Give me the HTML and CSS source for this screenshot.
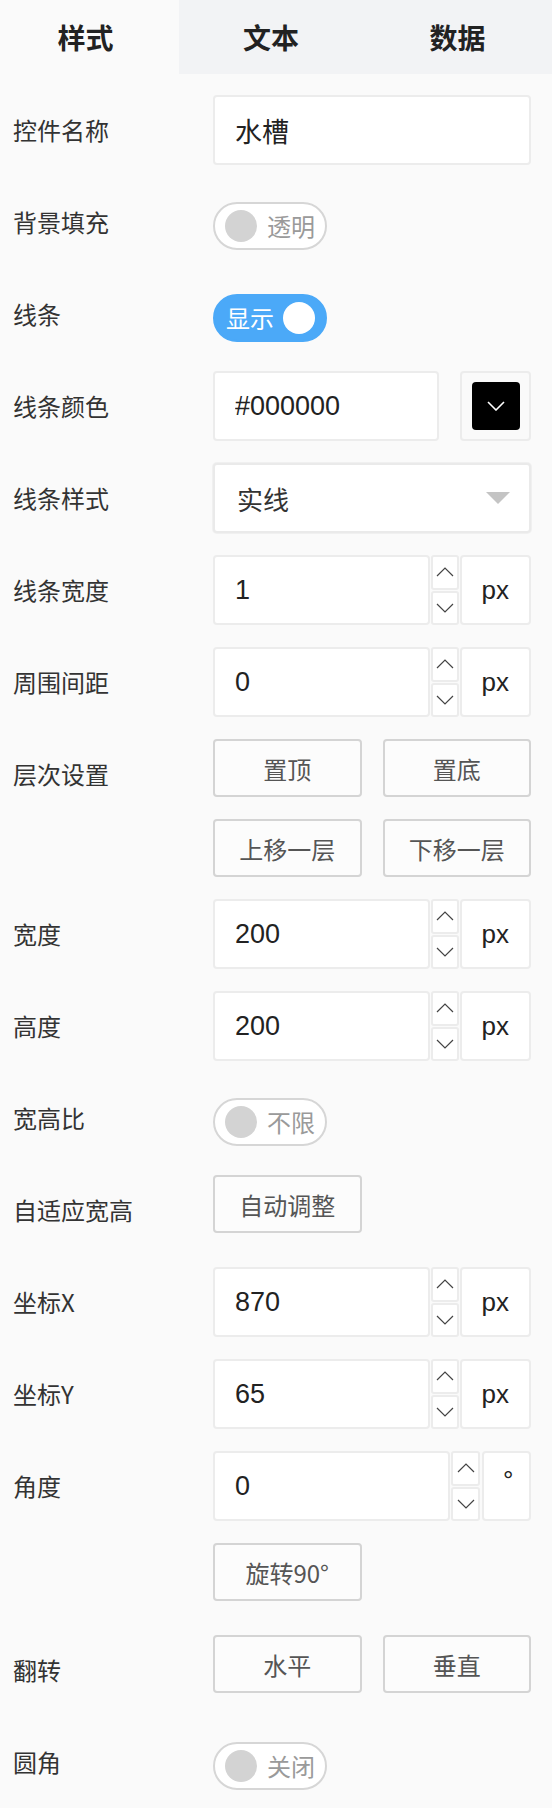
FILE: index.html
```html
<!DOCTYPE html>
<html lang="zh-CN">
<head>
<meta charset="utf-8">
<title>样式</title>
<link rel="stylesheet" href="styles.css">
</head>
<body>
<div class="panel">
  <div class="tabs">
    <div class="tab tab-active">样式</div>
    <div class="tab">文本</div>
    <div class="tab">数据</div>
  </div>

  <div class="form">
    <div class="row">
      <div class="label">控件名称</div>
      <div class="ctrl"><input class="field" value="水槽"></div>
    </div>

    <div class="row">
      <div class="label">背景填充</div>
      <div class="ctrl">
        <div class="toggle"><span class="knob"></span><span class="toggle-text">透明</span></div>
      </div>
    </div>

    <div class="row">
      <div class="label">线条</div>
      <div class="ctrl">
        <div class="toggle toggle-on"><span class="toggle-text">显示</span><span class="knob"></span></div>
      </div>
    </div>

    <div class="row">
      <div class="label">线条颜色</div>
      <div class="ctrl color-group">
        <input class="field" value="#000000">
        <div class="swatch-box">
          <div class="swatch">
            <svg width="18" height="10" viewBox="0 0 18 10"><polyline points="1,1 9,9 17,1" fill="none" stroke="#fff" stroke-width="1.6"/></svg>
          </div>
        </div>
      </div>
    </div>

    <div class="row">
      <div class="label">线条样式</div>
      <div class="ctrl">
        <div class="select"><span>实线</span><span class="caret"></span></div>
      </div>
    </div>

    <div class="row">
      <div class="label">线条宽度</div>
      <div class="ctrl num-group">
        <input class="field" value="1">
        <div class="stepper">
          <div class="step"><svg width="18" height="10" viewBox="0 0 18 10"><polyline points="1,9 9,1 17,9" fill="none" stroke="#444" stroke-width="1.2"/></svg></div>
          <div class="step"><svg width="18" height="10" viewBox="0 0 18 10"><polyline points="1,1 9,9 17,1" fill="none" stroke="#444" stroke-width="1.2"/></svg></div>
        </div>
        <div class="unit">px</div>
      </div>
    </div>

    <div class="row">
      <div class="label">周围间距</div>
      <div class="ctrl num-group">
        <input class="field" value="0">
        <div class="stepper">
          <div class="step"><svg width="18" height="10" viewBox="0 0 18 10"><polyline points="1,9 9,1 17,9" fill="none" stroke="#444" stroke-width="1.2"/></svg></div>
          <div class="step"><svg width="18" height="10" viewBox="0 0 18 10"><polyline points="1,1 9,9 17,1" fill="none" stroke="#444" stroke-width="1.2"/></svg></div>
        </div>
        <div class="unit">px</div>
      </div>
    </div>

    <div class="row">
      <div class="label">层次设置</div>
      <div class="ctrl btn-grid">
        <button class="btn">置顶</button>
        <button class="btn">置底</button>
        <button class="btn">上移一层</button>
        <button class="btn">下移一层</button>
      </div>
    </div>

    <div class="row">
      <div class="label">宽度</div>
      <div class="ctrl num-group">
        <input class="field" value="200">
        <div class="stepper">
          <div class="step"><svg width="18" height="10" viewBox="0 0 18 10"><polyline points="1,9 9,1 17,9" fill="none" stroke="#444" stroke-width="1.2"/></svg></div>
          <div class="step"><svg width="18" height="10" viewBox="0 0 18 10"><polyline points="1,1 9,9 17,1" fill="none" stroke="#444" stroke-width="1.2"/></svg></div>
        </div>
        <div class="unit">px</div>
      </div>
    </div>

    <div class="row">
      <div class="label">高度</div>
      <div class="ctrl num-group">
        <input class="field" value="200">
        <div class="stepper">
          <div class="step"><svg width="18" height="10" viewBox="0 0 18 10"><polyline points="1,9 9,1 17,9" fill="none" stroke="#444" stroke-width="1.2"/></svg></div>
          <div class="step"><svg width="18" height="10" viewBox="0 0 18 10"><polyline points="1,1 9,9 17,1" fill="none" stroke="#444" stroke-width="1.2"/></svg></div>
        </div>
        <div class="unit">px</div>
      </div>
    </div>

    <div class="row">
      <div class="label">宽高比</div>
      <div class="ctrl">
        <div class="toggle"><span class="knob"></span><span class="toggle-text">不限</span></div>
      </div>
    </div>

    <div class="row">
      <div class="label">自适应宽高</div>
      <div class="ctrl btn-grid">
        <button class="btn">自动调整</button>
      </div>
    </div>

    <div class="row">
      <div class="label">坐标X</div>
      <div class="ctrl num-group">
        <input class="field" value="870">
        <div class="stepper">
          <div class="step"><svg width="18" height="10" viewBox="0 0 18 10"><polyline points="1,9 9,1 17,9" fill="none" stroke="#444" stroke-width="1.2"/></svg></div>
          <div class="step"><svg width="18" height="10" viewBox="0 0 18 10"><polyline points="1,1 9,9 17,1" fill="none" stroke="#444" stroke-width="1.2"/></svg></div>
        </div>
        <div class="unit">px</div>
      </div>
    </div>

    <div class="row">
      <div class="label">坐标Y</div>
      <div class="ctrl num-group">
        <input class="field" value="65">
        <div class="stepper">
          <div class="step"><svg width="18" height="10" viewBox="0 0 18 10"><polyline points="1,9 9,1 17,9" fill="none" stroke="#444" stroke-width="1.2"/></svg></div>
          <div class="step"><svg width="18" height="10" viewBox="0 0 18 10"><polyline points="1,1 9,9 17,1" fill="none" stroke="#444" stroke-width="1.2"/></svg></div>
        </div>
        <div class="unit">px</div>
      </div>
    </div>

    <div class="row">
      <div class="label">角度</div>
      <div class="ctrl num-group">
        <input class="field" value="0">
        <div class="stepper stepper-wide">
          <div class="step"><svg width="18" height="10" viewBox="0 0 18 10"><polyline points="1,9 9,1 17,9" fill="none" stroke="#444" stroke-width="1.2"/></svg></div>
          <div class="step"><svg width="18" height="10" viewBox="0 0 18 10"><polyline points="1,1 9,9 17,1" fill="none" stroke="#444" stroke-width="1.2"/></svg></div>
        </div>
        <div class="unit unit-deg">°</div>
      </div>
    </div>

    <div class="row">
      <div class="label"></div>
      <div class="ctrl btn-grid">
        <button class="btn">旋转90°</button>
      </div>
    </div>

    <div class="row">
      <div class="label">翻转</div>
      <div class="ctrl btn-grid">
        <button class="btn">水平</button>
        <button class="btn">垂直</button>
      </div>
    </div>

    <div class="row">
      <div class="label">圆角</div>
      <div class="ctrl">
        <div class="toggle"><span class="knob"></span><span class="toggle-text">关闭</span></div>
      </div>
    </div>
  </div>
</div>
</body>
</html>
```

FILE: styles.css
```css
* {
  box-sizing: border-box;
}

html, body {
  margin: 0;
  padding: 0;
  background: #fafafa;
}

body {
  font-family: "Liberation Sans", "Noto Sans CJK SC", sans-serif;
  color: #333;
}

.panel {
  width: 552px;
}

.tabs {
  display: grid;
  grid-template-columns: 179px 184px 1fr;
  height: 74px;
  background: #f2f3f5;
}

.tab {
  display: flex;
  align-items: center;
  justify-content: center;
  font-family: "Noto Sans CJK SC", sans-serif;
  font-size: 28px;
  font-weight: 700;
  color: #222;
}

.tab-active {
  background: #fafafa;
  padding-right: 8px;
}

.form {
  display: flex;
  flex-direction: column;
  gap: 22px;
  padding: 21px 21px 0 13px;
}

.row {
  display: grid;
  grid-template-columns: 200px 1fr;
  min-height: 70px;
}

.label {
  font-family: "Noto Sans CJK SC", sans-serif;
  font-size: 24px;
  line-height: 70px;
  color: #333;
  white-space: nowrap;
}

.ctrl {
  min-width: 0;
}

.field {
  display: block;
  width: 100%;
  height: 70px;
  margin: 0;
  padding: 0 0 0 20px;
  border: 2px solid #ececec;
  border-radius: 4px;
  background: #fff;
  font-family: "Liberation Sans", "Noto Sans CJK SC", sans-serif;
  font-size: 27px;
  color: #222;
  outline: none;
}

.color-group {
  display: flex;
  gap: 21px;
}

.color-group .field {
  flex: 1;
  width: auto;
  min-width: 0;
}

.swatch-box {
  flex: none;
  width: 71px;
  height: 70px;
  border: 2px solid #ececec;
  border-radius: 4px;
  background: #fafafa;
  display: flex;
  align-items: center;
  justify-content: center;
}

.swatch {
  width: 48px;
  height: 48px;
  background: #000;
  border-radius: 4px;
  display: flex;
  align-items: center;
  justify-content: center;
}

.swatch svg {
  display: block;
}

.select {
  height: 70px;
  border: 2px solid #eaeaea;
  box-shadow: 0 0 0 1px #f0f0f0;
  border-radius: 4px;
  background: #fff;
  display: flex;
  align-items: center;
  justify-content: space-between;
  padding: 0 19px 0 22px;
  font-family: "Noto Sans CJK SC", sans-serif;
  font-size: 26px;
  color: #333;
}

.caret {
  width: 0;
  height: 0;
  border-left: 12px solid transparent;
  border-right: 12px solid transparent;
  border-top: 12px solid #c4c4c4;
}

.num-group {
  display: flex;
  gap: 1px;
}

.num-group .field {
  flex: 1;
  width: auto;
  min-width: 0;
}

.stepper {
  flex: none;
  width: 28px;
  height: 70px;
  display: flex;
  flex-direction: column;
  gap: 1px;
}

.stepper-wide {
  width: 29px;
  margin-right: 1px;
}

.step {
  flex: 1;
  border: 2px solid #ececec;
  border-radius: 3px;
  background: #fff;
  display: flex;
  align-items: center;
  justify-content: center;
}

.step svg {
  display: block;
}

.unit {
  flex: none;
  height: 70px;
  padding: 0 20px;
  border: 2px solid #ececec;
  border-radius: 4px;
  background: #fff;
  font-size: 26px;
  line-height: 66px;
  color: #222;
}

.unit-deg {
  padding: 0 19px;
  width: 49px;
  line-height: 54px;
}

.btn-grid {
  display: grid;
  grid-template-columns: 1fr 1fr;
  column-gap: 21px;
  row-gap: 22px;
  align-content: start;
}

.btn {
  height: 58px;
  margin: 0;
  padding: 0;
  border: 2px solid #d4d4d4;
  border-radius: 4px;
  background: #fcfcfc;
  font-family: "Noto Sans CJK SC", sans-serif;
  font-size: 24px;
  color: #555;
}

.toggle {
  margin-top: 15px;
  width: 114px;
  height: 48px;
  border: 2px solid #d6d6d6;
  border-radius: 24px;
  background: #fff;
  display: flex;
  align-items: center;
  gap: 10px;
  padding: 0 10px;
}

.knob {
  flex: none;
  width: 32px;
  height: 32px;
  border-radius: 50%;
  background: #d3d3d3;
}

.toggle-text {
  flex: none;
  white-space: nowrap;
  font-family: "Noto Sans CJK SC", sans-serif;
  font-size: 24px;
  line-height: 1;
  color: #9a9a9a;
}

.toggle-on {
  background: #4ba9f8;
  border-color: #4ba9f8;
  justify-content: space-between;
  gap: 0;
  padding: 0 10px 0 11px;
}

.toggle-on .knob {
  background: #fff;
}

.toggle-on .toggle-text {
  color: #fff;
}
```
